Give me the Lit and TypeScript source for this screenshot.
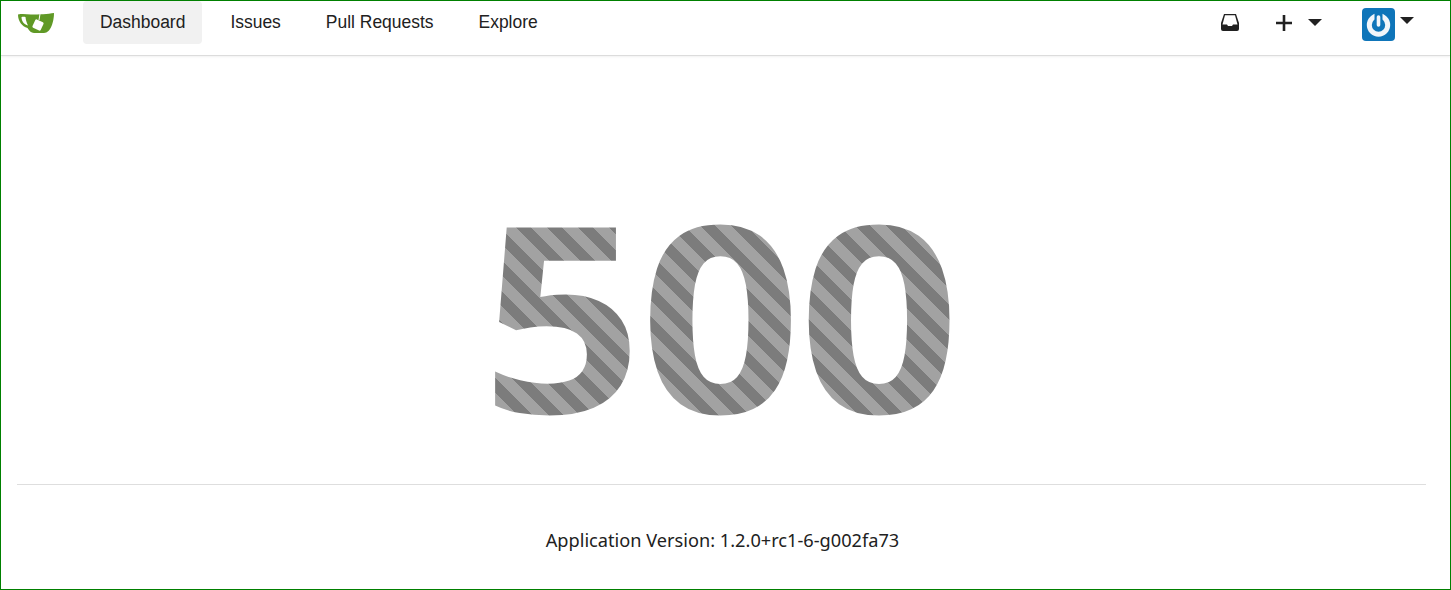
import { LitElement, html, css } from "lit";
import { customElement } from "lit/decorators.js";

@customElement("app-root")
export class AppRoot extends LitElement {
  static styles = css`
    :host {
      display: block;
      box-sizing: border-box;
      width: 1451px;
      height: 590px;
      border: 1px solid #008000;
      background: #fff;
      font-family: "Liberation Sans", Arial, sans-serif;
      color: rgba(0, 0, 0, 0.87);
      overflow: hidden;
    }
    .nav {
      display: flex;
      align-items: flex-start;
      height: 55px;
      box-sizing: border-box;
      border-bottom: 1px solid #dcdcdc;
      box-shadow: 0 1px 2px rgba(0, 0, 0, 0.06);
      padding-left: 16px;
    }
    .logo {
      width: 38px;
      height: 24px;
      margin-top: 10px;
      margin-right: 28px;
    }
    .item {
      font-size: 17.47px;
      line-height: 19px;
      padding: 12px 17px;
      margin-right: 11px;
      border-radius: 4px;
      color: #212121;
    }
    .item.active {
      background: #f1f1f1;
    }
    .right {
      margin-left: auto;
      display: flex;
      align-items: flex-start;
    }
    .inbox { width: 18px; height: 17px; margin-top: 13px; margin-right: 37px; }
    .plus { width: 16px; height: 16px; margin-top: 14px; margin-right: 16px; }
    .caret {
      width: 0;
      height: 0;
      border-left: 7px solid transparent;
      border-right: 7px solid transparent;
      border-top: 7px solid #212121;
    }
    .c1 { margin-top: 18px; margin-right: 40px; }
    .avatar { width: 33px; height: 33px; margin-top: 7px; margin-right: 5px; }
    .c2 { margin-top: 16px; margin-right: 36px; }
    main {
      display: flex;
      flex-direction: column;
      align-items: center;
      padding-right: 6px;
    }
    .code {
      margin-top: 126px;
      margin-right: 6px;
      height: 260px;
      font-family: "Open Sans", sans-serif;
      font-weight: 700;
      font-size: 260px;
      line-height: 260px;
      letter-spacing: -2.5px;
      color: transparent;
      transform: scaleX(1.085);
      background-image: repeating-linear-gradient(
        47.3deg,
        #a2a2a2 0,
        #a2a2a2 1px,
        #7c7c7c 1px,
        #7c7c7c 11px,
        #a2a2a2 11px,
        #a2a2a2 21px
      );
      background-clip: text;
      -webkit-background-clip: text;
    }
    hr {
      align-self: stretch;
      margin: 42px 18px 0 16px;
      border: 0;
      border-top: 1px solid #dedede;
    }
    .ver {
      margin-top: 44px;
      font-family: "Noto Sans", sans-serif;
      font-size: 18.2px;
      line-height: 22px;
      color: #212121;
    }
  `;

  render() {
    return html`
      <div class="nav">
        <svg class="logo" viewBox="0 0 38 24">
          <path
            fill="#609926"
            fill-rule="evenodd"
            d="M1 3.5 C6 2.5 10 3.5 14 3.5 C22 3.5 31 3 37 2 C37 10 34 22 27 22 L17 22 C14 22 12 19.5 10.5 17 C5 15.5 1 10 1 3.5 Z M4.5 6 C4.5 10 7 13.5 11 14.5 C9.5 11.5 8.7 8.5 8.5 6 C7 5.8 6 5.8 4.5 6 Z"
          />
          <path stroke="#fff" stroke-width="1" d="M23 3 L22 9" />
          <rect fill="#fff" x="16.5" y="9.5" width="9" height="9" rx="1.2" transform="rotate(25 21 14)" />
        </svg>
        <div class="item active">Dashboard</div>
        <div class="item">Issues</div>
        <div class="item">Pull Requests</div>
        <div class="item">Explore</div>
        <div class="right">
          <svg class="inbox" viewBox="0 0 18 17">
            <path fill="#212121" fill-rule="evenodd" d="M3 0 H15 L18 9 V15 A2 2 0 0 1 16 17 H2 A2 2 0 0 1 0 15 V9 Z M4 1.3 L1.5 10.5 H6 L7 12 H11 L12 10.5 H16.5 L14 1.3 Z" />
          </svg>
          <svg class="plus" viewBox="0 0 16 16">
            <path fill="none" stroke="#212121" stroke-width="2.6" d="M8 0 V16 M0 8 H16" />
          </svg>
          <div class="caret c1"></div>
          <svg class="avatar" viewBox="0 0 33 33">
            <rect width="33" height="33" rx="4" fill="#0f75b9" />
            <circle cx="16.5" cy="17" r="9.2" fill="none" stroke="#f2f6fa" stroke-width="5" />
            <path stroke="#0f75b9" stroke-width="8" d="M16.5 2 V13" />
            <path stroke="#f2f6fa" stroke-width="3.6" stroke-linecap="round" d="M16.5 9 V17" />
          </svg>
          <div class="caret c2"></div>
        </div>
      </div>
      <main>
        <div class="code">500</div>
        <hr />
        <div class="ver">Application Version: 1.2.0+rc1-6-g002fa73</div>
      </main>
    `;
  }
}
